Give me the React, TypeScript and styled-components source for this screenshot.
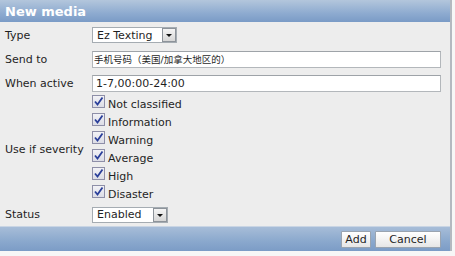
import React from "react";
import styled, { createGlobalStyle } from "styled-components";

const GlobalStyle = createGlobalStyle`
  html, body {
    margin: 0;
    padding: 0;
    background: #f7f7f7;
  }
  body {
    font-family: "DejaVu Sans", Verdana, sans-serif;
    font-size: 11px;
    color: #1f1f1f;
  }
`;

const severities = [
  "Not classified",
  "Information",
  "Warning",
  "Average",
  "High",
  "Disaster",
];

function App() {
  return (
    <>
      <GlobalStyle />
      <Dialog>
        <Header>New media</Header>
        <Body>
          <Row>
            <Label>Type</Label>
            <Select width={85}>
              <span>Ez Texting</span>
              <Arrow />
            </Select>
          </Row>
          <Row>
            <Label>Send to</Label>
            <Input cjk>手机号码（美国/加拿大地区的）</Input>
          </Row>
          <Row>
            <Label>When active</Label>
            <Input>1-7,00:00-24:00</Input>
          </Row>
          <SeverityRow>
            <Label>Use if severity</Label>
            <CheckList>
              {severities.map((s) => (
                <CheckItem key={s}>
                  <Checkbox>
                    <svg width="11" height="11" viewBox="0 0 11 11">
                      <path
                        d="M2 5.5 L4.5 8.5 L9.5 1.5"
                        fill="none"
                        stroke="#2a3f9a"
                        strokeWidth="1.8"
                      />
                    </svg>
                  </Checkbox>
                  <span>{s}</span>
                </CheckItem>
              ))}
            </CheckList>
          </SeverityRow>
          <StatusRow>
            <Label>Status</Label>
            <Select width={76}>
              <span>Enabled</span>
              <Arrow />
            </Select>
          </StatusRow>
        </Body>
        <Footer>
          <Button width={30}>Add</Button>
          <Button width={66}>Cancel</Button>
        </Footer>
      </Dialog>
    </>
  );
}

export default App;

const Dialog = styled.div`
  width: 450px;
  height: 251px;
  display: flex;
  flex-direction: column;
  background: #ededed;
  border-right: 2px solid #b4b9c0;
`;

const Header = styled.div`
  height: 22px;
  display: flex;
  align-items: center;
  padding-left: 5px;
  font-weight: bold;
  font-size: 13px;
  color: #ffffff;
  background: linear-gradient(#b3c6dc, #8eabd0 60%, #7a9bc6);
`;

const Body = styled.div`
  flex: 1;
  padding-top: 1px;
  display: flex;
  flex-direction: column;
`;

const Row = styled.div`
  height: 24px;
  display: grid;
  grid-template-columns: 87px 1fr;
  align-items: center;
  padding-left: 5px;
`;

const SeverityRow = styled(Row)`
  height: auto;
`;

const StatusRow = styled(Row)`
  height: 23px;
`;

const Label = styled.span`
  white-space: nowrap;
`;

const Select = styled.div<{ width: number }>`
  width: ${(p) => p.width}px;
  height: 16px;
  box-sizing: border-box;
  display: flex;
  align-items: center;
  justify-content: space-between;
  padding-left: 4px;
  background: #ffffff;
  border: 1px solid #a5acb2;
`;

const Arrow = styled.span`
  width: 14px;
  height: 14px;
  box-sizing: border-box;
  border: 1px solid #8d939a;
  background: linear-gradient(#f4f4f4, #d6d6d6);
  position: relative;
  &::after {
    content: "";
    position: absolute;
    left: 3px;
    top: 5px;
    border-left: 3px solid transparent;
    border-right: 3px solid transparent;
    border-top: 3px solid #111;
  }
`;

const Input = styled.div<{ cjk?: boolean }>`
  width: 349px;
  height: 17px;
  box-sizing: border-box;
  display: flex;
  align-items: center;
  padding-left: ${(p) => (p.cjk ? "1px" : "3px")};
  background: #ffffff;
  border: 1px solid #b3b7bb;
  border-top-color: #9ea3a8;
  font-family: "DejaVu Sans", "Noto Sans CJK SC", sans-serif;
  font-size: ${(p) => (p.cjk ? "9.5px" : "11px")};
  white-space: nowrap;
`;

const CheckList = styled.div`
  display: flex;
  flex-direction: column;
`;

const CheckItem = styled.div`
  height: 18px;
  display: flex;
  align-items: center;
  gap: 3px;
`;

const Checkbox = styled.span`
  width: 13px;
  height: 13px;
  box-sizing: border-box;
  margin-top: -5px;
  display: flex;
  align-items: center;
  justify-content: center;
  background: linear-gradient(#f2f2f6, #dcdde6);
  border: 1px solid #8e8fa8;
`;

const Footer = styled.div`
  height: 24px;
  display: flex;
  align-items: center;
  justify-content: flex-end;
  gap: 4px;
  padding-right: 9px;
  border-top: 1px solid #c9d5e4;
  background: linear-gradient(#a7bdd8, #8aa8cd 60%, #7c9cc6);
`;

const Button = styled.button<{ width: number }>`
  width: ${(p) => p.width}px;
  height: 17px;
  padding: 0;
  font-family: "DejaVu Sans", Verdana, sans-serif;
  font-size: 11px;
  color: #1f1f1f;
  background: linear-gradient(#ffffff, #e6e6e6);
  border: 1px solid #9aa4b0;
  border-radius: 1px;
`;
